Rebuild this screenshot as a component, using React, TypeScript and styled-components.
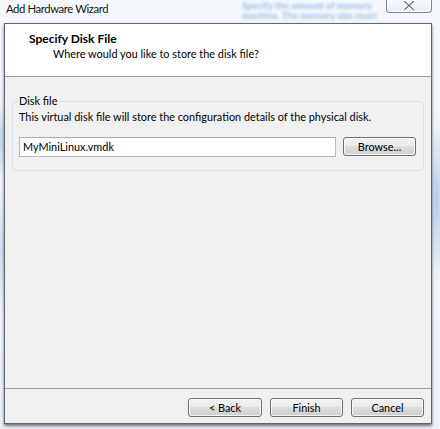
import React from 'react';
import styled, { createGlobalStyle } from 'styled-components';

const GlobalStyle = createGlobalStyle`
  html, body {
    margin: 0;
    padding: 0;
    background: #eef3f9;
  }
  * {
    box-sizing: border-box;
  }
`;

const uiFont = `Lato, 'Open Sans', Arial, sans-serif`;
const textSize = '10.9px';

const Frame = styled.div`
  position: relative;
  width: 440px;
  height: 429px;
  overflow: hidden;
  display: flex;
  flex-direction: column;
  font-family: ${uiFont};
  background:
    radial-gradient(ellipse 10px 40px at 2px 140px, rgba(150, 185, 225, 0.5), transparent),
    radial-gradient(ellipse 10px 60px at 2px 250px, rgba(170, 200, 235, 0.45), transparent),
    radial-gradient(ellipse 8px 80px at 437px 200px, rgba(120, 160, 215, 0.5), transparent),
    linear-gradient(180deg, #f4f8fc 0%, #eef3f9 100%);
`;

const GlassText = styled.div`
  position: absolute;
  left: 242px;
  top: 1px;
  font-size: 9.5px;
  font-weight: bold;
  line-height: 10px;
  color: #9bbbe6;
  filter: blur(1.4px);
  white-space: nowrap;
  pointer-events: none;
`;

const TitleBar = styled.div`
  position: relative;
  height: 23px;
  display: flex;
  align-items: flex-start;
  justify-content: space-between;
  flex-shrink: 0;
`;

const Title = styled.div`
  padding: 2px 0 0 6px;
  font-size: 11.3px;
  letter-spacing: -0.4px;
  line-height: 14px;
  color: #111;
  text-shadow: 0 0 6px #fff, 0 0 3px #fff;
`;

const CloseButton = styled.div`
  width: 46px;
  height: 14px;
  margin: -1px 8px 0 0;
  border: 1px solid #7d8694;
  border-top: none;
  border-radius: 0 0 4px 4px;
  background: linear-gradient(180deg, rgba(255, 255, 255, 0.4), rgba(230, 236, 244, 0.7));
  box-shadow: inset 0 0 0 1px rgba(255, 255, 255, 0.7);
  display: flex;
  justify-content: center;
  align-items: flex-end;
  padding-bottom: 2px;
`;

const Client = styled.div`
  margin: 0 8px 0 4px;
  height: 401px;
  border: 1px solid #5e6670;
  background: #f0f0f0;
  display: flex;
  flex-direction: column;
  box-shadow: 0 2px 3px rgba(0, 0, 0, 0.55);
`;

const Header = styled.div`
  height: 53px;
  background: #fff;
  border-bottom: 1px solid #a0a0a0;
  padding: 7px 0 0 24px;
  display: flex;
  flex-direction: column;
  flex-shrink: 0;
`;

const HeaderTitle = styled.div`
  font-weight: bold;
  font-size: 12px;
  line-height: 15px;
  color: #000;
`;

const HeaderSubtitle = styled.div`
  font-size: ${textSize};
  line-height: 15px;
  color: #000;
  padding-left: 24px;
`;

const Body = styled.div`
  flex: 1;
  padding: 17px 7px 0 7px;
  border-bottom: 1px solid #a0a0a0;
`;

const GroupBox = styled.fieldset`
  margin: 0;
  padding: 0 7px 13px 6px;
  border: 1px solid #d5dfe5;
  border-radius: 3px;
  min-width: 0;
`;

const Legend = styled.legend`
  margin-left: -2px;
  padding: 0 2px;
  font-size: ${textSize};
  line-height: 14px;
  color: #000;
`;

const Description = styled.div`
  margin-top: 2px;
  font-size: ${textSize};
  line-height: 14px;
  color: #000;
`;

const FileRow = styled.div`
  margin-top: 13px;
  display: flex;
  align-items: flex-start;
  gap: 7px;
`;

const TextInput = styled.div`
  width: 317px;
  height: 20px;
  border: 1px solid #b5b9c2;
  border-top-color: #abadb3;
  background: #fff;
  font-size: ${textSize};
  line-height: 18px;
  padding-left: 3px;
  color: #000;
`;

const Button = styled.div<{ $width: number }>`
  width: ${({ $width }) => $width}px;
  height: 19px;
  border: 1px solid #707070;
  border-radius: 3px;
  background: linear-gradient(180deg, #f2f2f2 0%, #ebebeb 45%, #dddddd 50%, #cfcfcf 100%);
  box-shadow: inset 0 0 0 1px rgba(255, 255, 255, 0.75);
  font-size: ${textSize};
  line-height: 17px;
  text-align: center;
  color: #000;
`;

const Footer = styled.div`
  height: 34px;
  flex-shrink: 0;
  display: flex;
  justify-content: flex-end;
  align-items: flex-start;
  gap: 8px;
  padding: 9px 7px 0 0;
`;

const CloseGlyph = () => (
  <svg width="12" height="9" viewBox="0 0 12 9">
    <path d="M1 0 L11 9 M11 0 L1 9" stroke="#fff" strokeWidth="3.4" strokeLinecap="square" />
    <path d="M1 0 L11 9 M11 0 L1 9" stroke="#6a6f78" strokeWidth="1.2" />
  </svg>
);

export default function App() {
  return (
    <Frame>
      <GlobalStyle />
      <GlassText>
        Specify the amount of memory
        <br />
        machine. The memory size must
      </GlassText>
      <TitleBar>
        <Title>Add Hardware Wizard</Title>
        <CloseButton>
          <CloseGlyph />
        </CloseButton>
      </TitleBar>
      <Client>
        <Header>
          <HeaderTitle>Specify Disk File</HeaderTitle>
          <HeaderSubtitle>Where would you like to store the disk file?</HeaderSubtitle>
        </Header>
        <Body>
          <GroupBox>
            <Legend>Disk file</Legend>
            <Description>
              This virtual disk file will store the configuration details of the physical disk.
            </Description>
            <FileRow>
              <TextInput>MyMiniLinux.vmdk</TextInput>
              <Button $width={73}>Browse...</Button>
            </FileRow>
          </GroupBox>
        </Body>
        <Footer>
          <Button $width={74}>&lt; Back</Button>
          <Button $width={73}>Finish</Button>
          <Button $width={73}>Cancel</Button>
        </Footer>
      </Client>
    </Frame>
  );
}
